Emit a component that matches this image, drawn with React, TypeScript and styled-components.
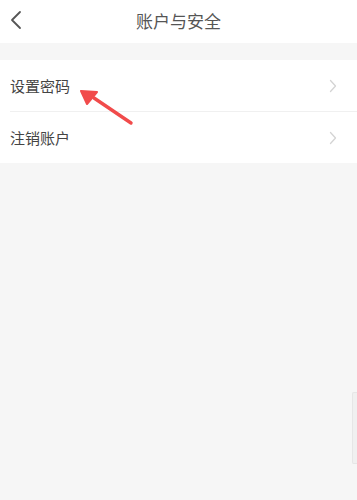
import React from 'react';
import styled, { createGlobalStyle } from 'styled-components';

const GlobalStyle = createGlobalStyle`
	html, body {
		margin: 0;
		padding: 0;
		background: #f6f6f6;
		font-family: "Noto Sans CJK SC", "Noto Sans", sans-serif;
	}
`;

const rows = ['设置密码', '注销账户'];

const App = () => {
	return (
		<Page>
			<GlobalStyle />
			<Header>
				<BackButton>
					<svg width="14" height="20" viewBox="0 0 14 20">
						<path d="M11 2 L3 10 L11 18" fill="none" stroke="#555" strokeWidth="1.8" strokeLinecap="round" strokeLinejoin="round" />
					</svg>
				</BackButton>
				<Title>账户与安全</Title>
				<span />
			</Header>
			<List>
				{rows.map((label, i) => (
					<Row key={label} $last={i === rows.length - 1}>
						<Label>{label}</Label>
						<svg width="8" height="14" viewBox="0 0 8 14">
							<path d="M1.5 1.5 L6.5 7 L1.5 12.5" fill="none" stroke="#d4d4d4" strokeWidth="1.3" strokeLinecap="round" strokeLinejoin="round" />
						</svg>
					</Row>
				))}
				{/* 지시 화살표 */}
				<Pointer width="60" height="40" viewBox="0 0 60 40">
					<path d="M53 35 L16 10" stroke="#f14b4b" strokeWidth="3.4" strokeLinecap="round" />
					<polygon points="3,3 19,4 9,16" fill="#f14b4b" stroke="#f14b4b" strokeWidth="2" strokeLinejoin="round" />
				</Pointer>
			</List>
			<ScrollThumb />
		</Page>
	);
};

export default App;

const Page = styled.div`
	position: relative;
	width: 357px;
	height: 500px;
	background: #f6f6f6;
	overflow: hidden;
`;

const Header = styled.div`
	display: grid;
	grid-template-columns: 40px 1fr 40px;
	align-items: center;
	height: 43px;
	background: #fff;
`;

const BackButton = styled.div`
	display: flex;
	padding-left: 9px;
	padding-bottom: 4px;
`;

const Title = styled.div`
	text-align: center;
	font-size: 17px;
	color: #555;
	padding-bottom: 3px;
`;

const List = styled.div`
	position: relative;
	margin-top: 17px;
	background: #fff;
`;

const Row = styled.div<{ $last: boolean }>`
	display: flex;
	align-items: center;
	justify-content: space-between;
	height: 51px;
	margin-left: 10px;
	padding-right: 20px;
	border-bottom: ${({ $last }) => ($last ? 'none' : '1px solid #f0f0f0')};
`;

const Label = styled.div`
	font-size: 15px;
	color: #444;
`;

const Pointer = styled.svg`
	position: absolute;
	left: 78px;
	top: 28px;
`;

const ScrollThumb = styled.div`
	position: absolute;
	right: 0;
	top: 392px;
	width: 4px;
	height: 70px;
	background: #f0f0f0;
	border: 1px solid #e6e6e6;
	border-right: none;
	border-radius: 2px 0 0 2px;
`;
